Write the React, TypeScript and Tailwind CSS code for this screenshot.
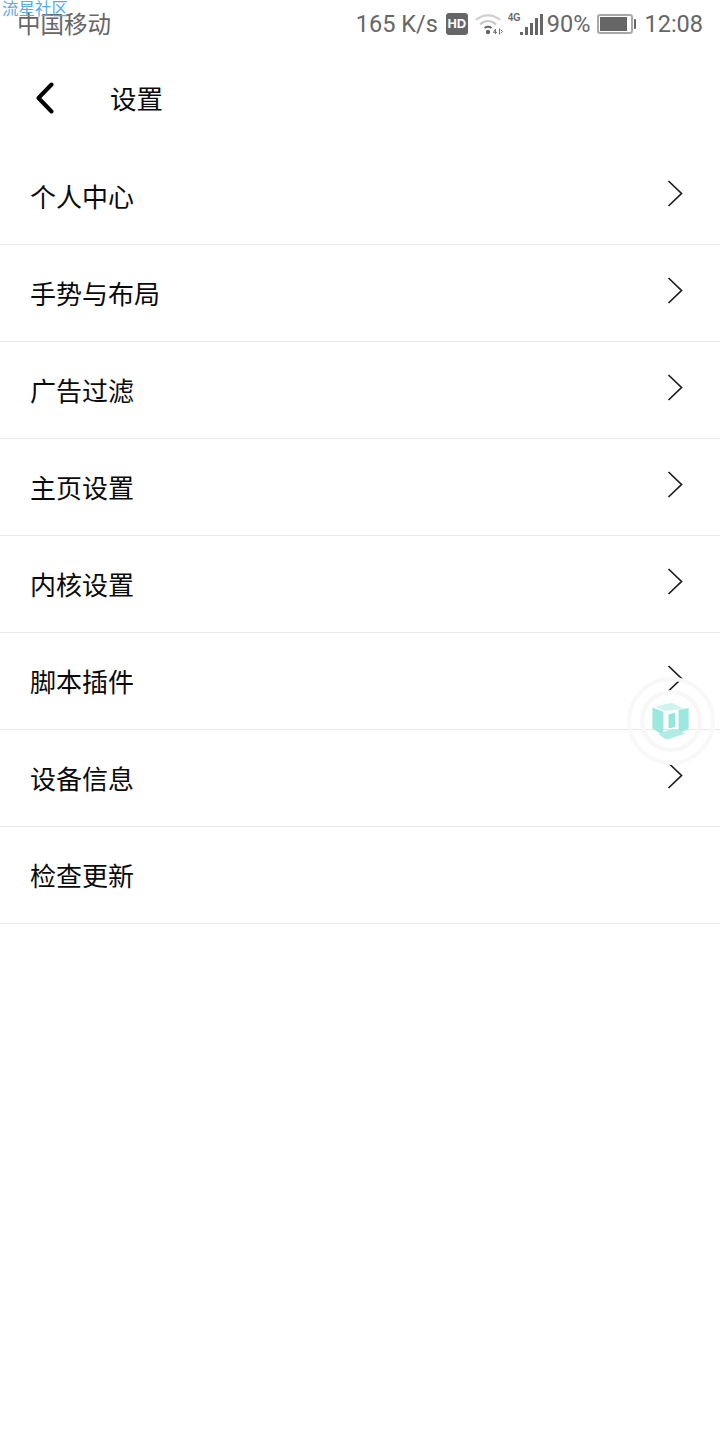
const rows = [
  { label: "个人中心", arrow: true },
  { label: "手势与布局", arrow: true },
  { label: "广告过滤", arrow: true },
  { label: "主页设置", arrow: true },
  { label: "内核设置", arrow: true },
  { label: "脚本插件", arrow: true },
  { label: "设备信息", arrow: true },
  { label: "检查更新", arrow: false },
];

function BackArrow() {
  return (
    <svg width="20" height="32" viewBox="0 0 20 32" fill="none">
      <path d="M16.5 2.5L3.5 16L16.5 29.5" stroke="#000" strokeWidth="4" strokeLinecap="round" strokeLinejoin="round" />
    </svg>
  );
}

function RowArrow() {
  return (
    <svg width="16" height="27" viewBox="0 0 16 27" fill="none">
      <path d="M1.5 1L14.5 13.5L1.5 26" stroke="#1c1c1c" strokeWidth="1.7" />
    </svg>
  );
}

function WifiIcon() {
  return (
    <svg width="28" height="22" viewBox="0 0 28 22" fill="none">
      <path d="M1 7C8 0.8 18 0.8 25 7" stroke="#cfcfcf" strokeWidth="2.2" />
      <path d="M5 11.5C10 7 16 7 21 11.5" stroke="#c8c8c8" strokeWidth="2.2" />
      <path d="M9.5 15C11.5 13.6 14.5 13.6 16.5 15" stroke="#666" strokeWidth="2" />
      <circle cx="13" cy="19" r="2.2" fill="#666" />
      <path d="M20.5 21V16L18.5 19.4H22M24.5 15.5V21.5M25.7 16.8L27.5 18.5L25.7 20.2" stroke="#777" strokeWidth="1" />
    </svg>
  );
}

function SignalIcon() {
  return (
    <div className="relative h-[22px] w-[36px]">
      <span className="absolute left-[1px] top-[-1px] origin-top-left scale-x-[0.85] font-['Liberation_Sans',sans-serif] text-[11px] font-bold leading-[11px] text-[#666]">
        4G
      </span>
      <div className="absolute bottom-0 right-0 flex items-end gap-[2px]">
        <span className="h-[3px] w-[3px] bg-[#666]" />
        <span className="h-[8px] w-[3px] bg-[#666]" />
        <span className="h-[12px] w-[3px] bg-[#666]" />
        <span className="h-[17px] w-[3px] bg-[#666]" />
        <span className="h-[21px] w-[3px] bg-[#666]" />
      </div>
    </div>
  );
}

function BatteryIcon() {
  return (
    <div className="flex items-center gap-[1px]">
      <div className="h-[20px] w-[36px] rounded-[3px] border-2 border-[#a8a8a8] p-[1px]">
        <div className="h-full w-[27px] bg-[#666]" />
      </div>
      <span className="h-[10px] w-[2px] rounded-r-[1px] bg-[#666]" />
    </div>
  );
}

function StatusBar() {
  return (
    <div className="flex h-[48px] items-center justify-between pl-[17px] pr-[17px] font-['Roboto','Noto_Sans_CJK_SC',sans-serif] text-[23.5px] text-[#666]">
      <span className="font-['Noto_Sans_CJK_SC',sans-serif] text-[23.5px] leading-none">中国移动</span>
      <div className="flex items-center">
        <span className="mr-[8px] pt-[2px]">165 K/s</span>
        <span className="mr-[7px] flex h-[22px] w-[22px] items-center justify-center rounded-[3px] bg-[#666] font-['Liberation_Sans',sans-serif] text-[13px] font-bold text-white">
          HD
        </span>
        <div className="mr-[4px]">
          <WifiIcon />
        </div>
        <SignalIcon />
        <span className="ml-[4px] mr-[7px] pt-[2px]">90%</span>
        <BatteryIcon />
        <span className="ml-[8px] pt-[2px]">12:08</span>
      </div>
    </div>
  );
}

// Floating shortcut: two soft rings around a cube mark
function FloatingCube() {
  return (
    <div className="absolute left-[627px] top-[677px] flex h-[88px] w-[88px] items-center justify-center rounded-full border-[4px] border-[#f8f8f8]">
      <div className="flex h-[62px] w-[62px] items-center justify-center rounded-full border-[4px] border-[#f7f7f7]">
        <svg width="42" height="42" viewBox="90 150 125 125" className="shrink-0">
          <path d="M97 172L130 185V256L97 235Z" fill="#9ce8df" />
          <path d="M105 170L155 158L190 176L137 183Z" fill="#cdf4ef" />
          <path d="M145 193L165 188V230L145 235Z" fill="#93e6dc" />
          <path d="M175 180L205 174V236L175 250Z" fill="#9ce8df" />
          <path d="M115 252L140 241L166 236L195 250L140 268Z" fill="#aeece5" />
        </svg>
      </div>
    </div>
  );
}

export default function App() {
  return (
    <div className="relative h-[1440px] w-[720px] overflow-hidden bg-white font-['Noto_Sans_CJK_SC',sans-serif]">
      <span className="absolute left-[2px] top-0 text-[16.5px] leading-[17px] text-[#5aa9e6]">流星社区</span>
      <StatusBar />

      <div className="flex h-[100px] items-center pl-[35px]">
        <BackArrow />
        <span className="ml-[55px] text-[26.5px] leading-none text-[#0a0a0a]">设置</span>
      </div>

      <ul>
        {rows.map((row) => (
          <li
            key={row.label}
            className="flex h-[97px] items-center justify-between border-b border-[#e8e8e8] pl-[30px] pr-[37px]"
          >
            <span className="text-[26px] leading-none text-[#0a0a0a]">{row.label}</span>
            {row.arrow ? (
              <span className="mb-[6px]">
                <RowArrow />
              </span>
            ) : null}
          </li>
        ))}
      </ul>

      <FloatingCube />
    </div>
  );
}
